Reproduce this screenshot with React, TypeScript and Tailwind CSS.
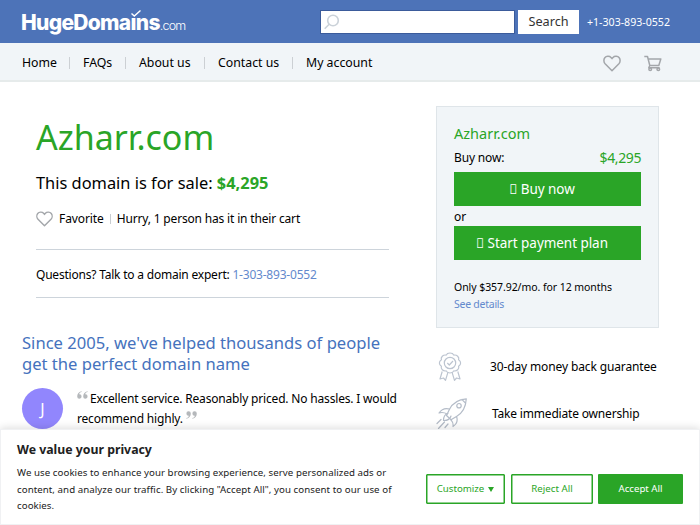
import React from "react";

function Heart({ className }: { className: string }) {
  return (
    <svg viewBox="0 0 18 17" className={className} fill="none" stroke="currentColor" strokeWidth="1.5" strokeLinejoin="round">
      <path d="M9 15.7 2.1 8.8C.6 7.2.5 4.3 1.8 2.7 3.2.9 6.4.6 8 2.4L9 3.6l1-1.2c1.6-1.8 4.8-1.5 6.2.3 1.3 1.6 1.2 4.5-.3 6.1Z" />
    </svg>
  );
}

function Cart() {
  return (
    <svg viewBox="0 0 18 17" className="h-[17px] w-[18px] text-[#a3a6aa]" fill="none" stroke="currentColor" strokeWidth="1.5" strokeLinejoin="round">
      <path d="M.3 1.5h3.2l2.3 9h9l2-6.500H4.200M5.800 10.500l-1 2.300h10.800" />
      <circle cx="6.200" cy="14.300" r="1.300" />
      <circle cx="14.300" cy="14.300" r="1.300" />
    </svg>
  );
}

function Ribbon() {
  return (
    <svg viewBox="0 0 24 29" className="ml-[2px] h-[29px] w-[24px] shrink-0 text-[#bcc4d0]" fill="none" stroke="currentColor" strokeWidth="1.2" strokeLinejoin="round">
      <path d="M8.200 3.100C9.300.3 14.700.3 15.800 3.100c3-.6 5.800 2 4.800 4.700 2.700 1.700 2.700 4.700 0 6.400 1 2.700-1.800 5.300-4.800 4.700-1.100 2.800-6.500 2.800-7.600 0-3 .6-5.800-2-4.800-4.700-2.700-1.700-2.700-4.700 0-6.400-1-2.700 1.800-5.300 4.800-4.700Z" />
      <circle cx="12" cy="11" r="5.700" />
      <path d="m9.300 11 2 2 3.700-4M4.200 19.500 2 27l3.500-1 2 2.300 2.400-8M19.800 19.500 22 27l-3.500-1-2 2.300-2.400-8" />
    </svg>
  );
}

function Rocket() {
  return (
    <svg viewBox="0 0 31 31" className="h-[31px] w-[31px] shrink-0 text-[#b4bcc8]" fill="none" stroke="currentColor" strokeWidth="1.2" strokeLinejoin="round" strokeLinecap="round">
      <path d="M30.300.8c-8 .6-13.800 4.200-16.800 10.500L10.500 17.500l4.500 4.300 5.500-3.300C26.800 15 29.800 9.500 30.300.8ZM26 1.500l3.700 3.800" />
      <circle cx="23" cy="7.700" r="2.200" />
      <path d="M13.500 11c-4.500-1.300-8 .3-10.500 4 3-1 5.500-.5 8.200 1M20.500 18.500c1.500 4 .2 7.500-3.500 10 .5-3 0-4.500-2-6.700M12 15.500c-2.500.5-4.500 3-4.500 7 4 .2 6.700-2 7.500-4.500M5 21.500 1 25.500M8.500 24l-6 6.500M12 26l-3 3.500" />
    </svg>
  );
}

function Magnifier() {
  return (
    <svg viewBox="0 0 16 16" className="h-4 w-4 text-[#cbd2d9]" fill="none" stroke="currentColor" strokeWidth="1.6">
      <circle cx="9" cy="6.5" r="5.3" />
      <path d="m5.200 10.300-4.500 4.500" />
    </svg>
  );
}

const NAV = [
  { label: "Home", size: "w-[47px]" },
  { label: "FAQs", size: "w-[42px]" },
  { label: "About us", size: "w-[65px]" },
  { label: "Contact us", size: "w-[74px]" },
  { label: "My account", size: "w-[90px]" },
];

function Header() {
  return (
    <header>
      <div className="flex h-[43px] items-center bg-[#4d73b8]">
        <div className="relative ml-[21px] flex w-[299px] items-baseline pt-[2px] whitespace-nowrap font-[Inter] text-white">
          <span className="text-[21px] leading-[26px] font-extrabold tracking-[-0.7px]">HugeDoma<span>ı</span>ns</span>
          <span className="text-[12.5px] font-light tracking-[-0.8px]">.com</span>
          <svg viewBox="0 0 10 7" className="absolute top-[2px] left-[110px] h-[7px] w-[10px]" fill="none" stroke="white" strokeWidth="1.4">
            <path d="m.5 3.500 2.800 2.500L9.500.5" />
          </svg>
        </div>
        <div className="flex h-[24px] w-[195px] items-center border border-[#3b5b9b] bg-white pl-[3px]">
          <Magnifier />
        </div>
        <button className="ml-[3px] h-[24px] w-[61px] bg-white text-[12.7px] leading-[23px] text-[#333]">Search</button>
        <span className="ml-[8px] pt-[2px] text-[10.6px] text-white">+1-303-893-0552</span>
      </div>
      <nav className="flex h-[39px] items-center border-b-2 border-[#e6ebeb] bg-[#f1f5f8] pt-[2px] pl-[22px] text-[12.3px] text-black">
        {NAV.map((n, i) => (
          <div key={n.label} className="flex items-center">
            {i > 0 && <span className="mr-[13px] h-[12px] w-px bg-[#ccd0d4]" />}
            <span className={`pt-[2px] whitespace-nowrap ${n.size}`}>{n.label}</span>
          </div>
        ))}
        <div className="ml-auto flex items-center pt-px pr-[38px]">
          <Heart className="mr-[23px] h-[17px] w-[18px] text-[#a3a6aa]" />
          <Cart />
        </div>
      </nav>
    </header>
  );
}

function Listing() {
  return (
    <section className="w-[415px] pl-[22px]">
      <div className="ml-[14px] w-[353px]">
        <h1 className="mt-[29px] h-[52px] text-[34px] leading-[52px] text-[#2aa527]">Azharr.com</h1>
        <p className="mt-[8px] h-[24px] text-[16.4px] leading-[24px] whitespace-nowrap">
          This domain is for sale: <b className="text-[#2aa527]">$4,295</b>
        </p>
        <div className="mt-[14px] flex h-[20px] items-center text-[12px] whitespace-nowrap">
          <Heart className="mr-[6px] h-[16px] w-[17px] text-[#a3a6aa]" />
          <span className="tracking-[-0.1px]">Favorite</span>
          <span className="mx-[6px] h-[10px] w-px bg-[#c8ccd0]" />
          <span className="tracking-[-0.17px]">Hurry, 1 person has it in their cart</span>
        </div>
        <div className="mt-[20px] flex h-[49px] items-center border-y border-[#cdd4db] pt-[2px] text-[12px] tracking-[-0.21px] whitespace-nowrap">
          <span>Questions? Talk to a domain expert: <span className="text-[#6389cd]">1-303-893-0552</span></span>
        </div>
      </div>
      <h2 className="mt-[34px] text-[16.6px] leading-[21.3px] whitespace-nowrap text-[#4572bd]">
        Since 2005, we've helped thousands of people<br />get the perfect domain name
      </h2>
      <div className="mt-[13px] flex">
        <div className="flex size-[41px] shrink-0 items-center justify-center rounded-full bg-[#9186fd] pt-[2px] text-[16px] text-white">J</div>
        <p className="mt-px ml-[14px] text-[12px] leading-[20px] tracking-[-0.18px] whitespace-nowrap">
          <span className="inline-block h-[20px] w-[13px] align-top"><Quote /></span>
          Excellent service. Reasonably priced. No hassles. I would<br />
          recommend highly. <Quote closing />
        </p>
      </div>
    </section>
  );
}

function Quote({ closing = false }: { closing?: boolean }) {
  return (
    <svg viewBox="0 0 11 8" className={closing ? "inline-block h-[8px] w-[11px] rotate-180 -translate-y-[4px]" : "mt-[2px] block h-[8px] w-[11px]"} fill="#b5b8bb">
      <path d="M4.500.3C1.500 1 .2 3 .2 5.500a2.200 2.200 0 1 0 2-2.200C2.300 2 3 1.300 4.700.9ZM10.500.3C7.500 1 6.200 3 6.200 5.500a2.200 2.200 0 1 0 2-2.200C8.300 2 9 1.300 10.700.9Z" />
    </svg>
  );
}

function Purchase() {
  return (
    <aside className="ml-[21px] w-[223px] pt-[24px]">
      <div className="h-[222px] border border-[#dfe5e9] bg-[#f1f5f8] px-[17px] pt-[15px]">
        <h3 className="text-[14.5px] leading-[22px] text-[#2aa527]">Azharr.com</h3>
        <div className="flex h-[27px] items-center justify-between text-[12px]">
          <span className="tracking-[-0.15px]">Buy now:</span>
          <span className="text-[14px] tracking-[-0.4px] text-[#2aa527]">$4,295</span>
        </div>
        <button className="mt-px block h-[34px] w-full bg-[#2aa527] pr-[11px] text-[13.5px] leading-[34px] tracking-[-0.05px] text-white">{"\uf07a"} Buy now</button>
        <div className="h-[20px] pt-px text-[12px] leading-[20px]">or</div>
        <button className="block h-[34px] w-full bg-[#2aa527] pr-[11px] text-[13.5px] leading-[34px] tracking-[-0.05px] text-white">{"\uf073"} Start payment plan</button>
        <p className="mt-[19px] text-[10.5px] leading-[17px] tracking-[-0.06px]">Only $357.92/mo. for 12 months</p>
        <a className="block text-[10.5px] leading-[17px] tracking-[-0.25px] text-[#6389cd]">See details</a>
      </div>
      <div className="mt-[23px] flex h-[31px] items-center text-[12px] tracking-[-0.13px] whitespace-nowrap">
        <Ribbon />
        <span className="ml-[28px]">30-day money back guarantee</span>
      </div>
      <div className="mt-[16px] flex h-[31px] items-center text-[12px] tracking-[-0.18px] whitespace-nowrap">
        <Rocket />
        <span className="ml-[25px]">Take immediate ownership</span>
      </div>
    </aside>
  );
}

function ConsentBanner() {
  return (
    <div className="absolute bottom-0 left-0 flex h-[96px] w-full border border-[#f0f1f3] bg-white pl-[16px] shadow-[0_-1px_8px_rgba(0,0,0,0.14)]">
      <div className="w-[409px] pt-[10px] whitespace-nowrap text-[#212121]">
        <h4 className="text-[12.3px] leading-[20px] font-bold">We value your privacy</h4>
        <p className="mt-[5px] text-[9.7px] leading-[16.5px] tracking-[0.06px]">
          We use cookies to enhance your browsing experience, serve personalized ads or<br />
          content, and analyze our traffic. By clicking "Accept All", you consent to our use of<br />
          cookies.
        </p>
      </div>
      <div className="mt-[44px] flex h-[30px] text-[9.7px] text-[#2aa527]">
        <button className="flex w-[79px] items-center justify-center rounded-[1px] border border-[#2aa527] shadow-[inset_0_0_0_0.5px_#2aa527]">
          Customize
          <span className="ml-[4px] border-x-[3.5px] border-t-[5px] border-x-transparent border-t-[#2aa527]" />
        </button>
        <button className="ml-[6px] w-[82px] rounded-[1px] border border-[#2aa527] shadow-[inset_0_0_0_0.5px_#2aa527]">Reject All</button>
        <button className="ml-[5px] w-[85px] rounded-[1px] bg-[#2aa527] text-white">Accept All</button>
      </div>
    </div>
  );
}

export default function App() {
  return (
    <div className="relative h-[525px] w-[700px] overflow-hidden bg-white font-['Noto_Sans',sans-serif] text-black">
      <Header />
      <main className="flex">
        <Listing />
        <Purchase />
      </main>
      <ConsentBanner />
    </div>
  );
}
